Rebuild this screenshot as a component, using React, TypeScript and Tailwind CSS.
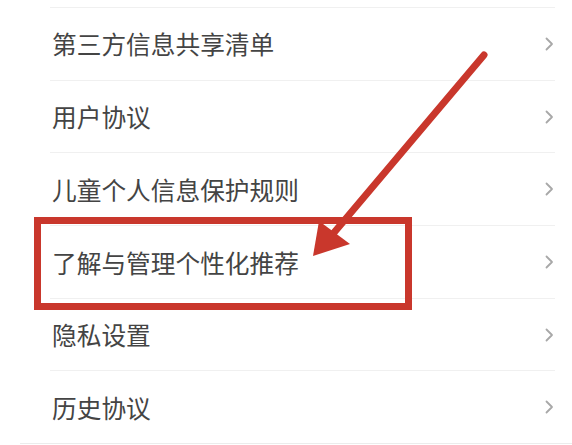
const items = [
  "第三方信息共享清单",
  "用户协议",
  "儿童个人信息保护规则",
  "了解与管理个性化推荐",
  "隐私设置",
  "历史协议",
];

function Chevron() {
  return (
    <svg width="10" height="16" viewBox="0 0 10 16" fill="none">
      <path
        d="M2.5 2.5 L8 8 L2.5 13.5"
        stroke="#a8a8a8"
        strokeWidth="1.8"
        strokeLinecap="round"
        strokeLinejoin="round"
      />
    </svg>
  );
}

export default function App() {
  return (
    <div
      className="relative w-[572px] h-[445px] overflow-hidden bg-white"
      style={{ fontFamily: '"Noto Sans CJK SC", "Noto Sans", sans-serif' }}
    >
      {/* list */}
      <div className="pt-[7px]">
        <div className="ml-[50px] mr-[17px] border-t border-[#f0f0f0]" />
        {items.map((label, i) => (
          <div
            key={label}
            className={
              i === items.length - 1
                ? "ml-[20px] border-b border-[#ececec]"
                : "ml-[50px] mr-[17px] border-b border-[#f0f0f0]"
            }
          >
            <div
              className={
                "h-[71.7px] flex items-center justify-between " +
                (i === items.length - 1 ? "pl-[32px] pr-[17px]" : "pl-[2px]")
              }
            >
              <span className="text-[24.7px] text-[#444444] leading-none">
                {label}
              </span>
              <div className="mr-[1px]">
                <Chevron />
              </div>
            </div>
          </div>
        ))}
      </div>

      {/* highlight box */}
      <div className="absolute left-[34px] top-[217px] w-[378px] h-[93px] border-[7px] border-[#c9372c]" />

      {/* arrow */}
      <svg
        className="absolute left-0 top-0"
        width="572"
        height="445"
        viewBox="0 0 572 445"
      >
        <line
          x1="484"
          y1="55"
          x2="332"
          y2="235"
          stroke="#c9372c"
          strokeWidth="7"
          strokeLinecap="round"
        />
        <polygon points="313,256 319,221 350,244" fill="#c9372c" />
      </svg>
    </div>
  );
}
